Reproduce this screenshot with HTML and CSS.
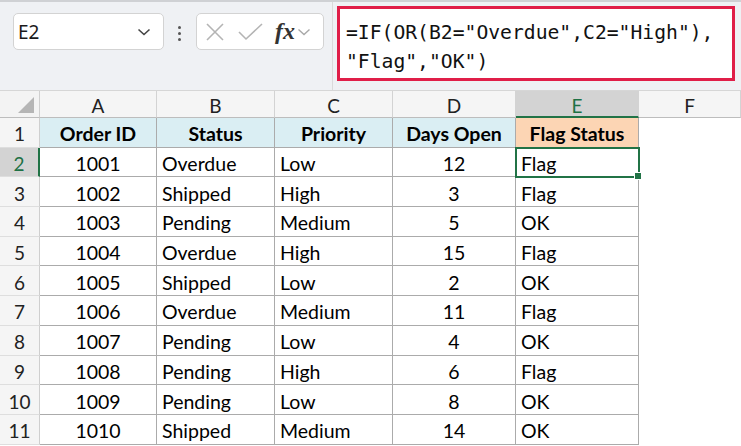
FILE: index.html
```html
<!DOCTYPE html>
<html>
<head>
<meta charset="utf-8">
<link rel="stylesheet" href="styles.css">
</head>
<body>
<div class="app">
  <div class="toolbar">
    <div class="namebox">
      <span class="name">E2</span>
      <svg class="chev" width="14" height="10" viewBox="0 0 14 10"><path d="M1.5 2.5 L7 7.5 L12.5 2.5" fill="none" stroke="#444" stroke-width="1.6"/></svg>
    </div>
    <div class="kebab"><i></i><i></i><i></i></div>
    <div class="fnbox">
      <svg width="18" height="18" viewBox="0 0 18 18"><path d="M1 1 L17 17 M17 1 L1 17" stroke="#b4b4b4" stroke-width="1.6" fill="none"/></svg>
      <svg width="25" height="20" viewBox="0 0 25 20"><path d="M1 10 L8 17 L24 2" stroke="#b4b4b4" stroke-width="1.6" fill="none"/></svg>
      <span class="fx">fx</span>
      <svg class="chev2" width="14" height="10" viewBox="0 0 14 10"><path d="M1.5 2.5 L7 7.5 L12.5 2.5" fill="none" stroke="#a8a8a8" stroke-width="1.4"/></svg>
    </div>
    <div class="formula-wrap">
      <div class="formula">=IF(OR(B2="Overdue",C2="High"),<br>"Flag","OK")</div>
    </div>
  </div>

  <div class="sheet">
    <div class="corner"><span class="tri"></span></div>
    <div class="ch">A</div>
    <div class="ch">B</div>
    <div class="ch">C</div>
    <div class="ch">D</div>
    <div class="ch sel">E</div>
    <div class="ch">F</div>

    <div class="rh">1</div>
    <div class="c hd blue">Order ID</div>
    <div class="c hd blue">Status</div>
    <div class="c hd blue">Priority</div>
    <div class="c hd blue">Days Open</div>
    <div class="c hd peach">Flag Status</div>
    <div class="c empty"></div>

    <div class="rh sel">2</div>
    <div class="c ctr">1001</div><div class="c">Overdue</div><div class="c">Low</div><div class="c ctr">12</div><div class="c active">Flag<span class="handle"></span></div><div class="c empty"></div>

    <div class="rh">3</div>
    <div class="c ctr">1002</div><div class="c">Shipped</div><div class="c">High</div><div class="c ctr">3</div><div class="c">Flag</div><div class="c empty"></div>

    <div class="rh">4</div>
    <div class="c ctr">1003</div><div class="c">Pending</div><div class="c">Medium</div><div class="c ctr">5</div><div class="c">OK</div><div class="c empty"></div>

    <div class="rh">5</div>
    <div class="c ctr">1004</div><div class="c">Overdue</div><div class="c">High</div><div class="c ctr">15</div><div class="c">Flag</div><div class="c empty"></div>

    <div class="rh">6</div>
    <div class="c ctr">1005</div><div class="c">Shipped</div><div class="c">Low</div><div class="c ctr">2</div><div class="c">OK</div><div class="c empty"></div>

    <div class="rh">7</div>
    <div class="c ctr">1006</div><div class="c">Overdue</div><div class="c">Medium</div><div class="c ctr">11</div><div class="c">Flag</div><div class="c empty"></div>

    <div class="rh">8</div>
    <div class="c ctr">1007</div><div class="c">Pending</div><div class="c">Low</div><div class="c ctr">4</div><div class="c">OK</div><div class="c empty"></div>

    <div class="rh">9</div>
    <div class="c ctr">1008</div><div class="c">Pending</div><div class="c">High</div><div class="c ctr">6</div><div class="c">Flag</div><div class="c empty"></div>

    <div class="rh">10</div>
    <div class="c ctr">1009</div><div class="c">Pending</div><div class="c">Low</div><div class="c ctr">8</div><div class="c">OK</div><div class="c empty"></div>

    <div class="rh">11</div>
    <div class="c ctr">1010</div><div class="c">Shipped</div><div class="c">Medium</div><div class="c ctr">14</div><div class="c">OK</div><div class="c empty"></div>
  </div>
</div>
</body>
</html>
```

FILE: styles.css
```css
* { box-sizing: border-box; }
html, body { margin: 0; padding: 0; background: #fff; }
body { width: 741px; height: 446px; overflow: hidden; }

.app { width: 741px; }

.toolbar {
  height: 91px;
  background: #eff1f4;
  border-top: 2px solid #cfd1d4;
  border-bottom: 1px solid #d6d6d6;
  display: flex;
  align-items: flex-start;
  position: relative;
}

.namebox {
  margin: 11px 0 0 13px;
  width: 151px;
  height: 37px;
  background: #fff;
  border: 1px solid #d3d3d3;
  border-radius: 5px;
  display: flex;
  align-items: center;
  justify-content: space-between;
  padding: 0 12px 0 4px;
}
.name {
  font-family: "Noto Sans", sans-serif;
  font-size: 19px;
  color: #1a1a1a;
}
.kebab {
  margin: 24px 0 0 14px;
  width: 4px;
  display: flex;
  flex-direction: column;
  gap: 3px;
}
.kebab i {
  display: block;
  width: 3px;
  height: 3px;
  background: #555;
  border-radius: 50%;
}
.fnbox {
  margin: 11px 0 0 14px;
  width: 128px;
  height: 37px;
  background: #fff;
  border: 1px solid #d3d3d3;
  border-radius: 5px;
  display: flex;
  align-items: center;
  padding: 0 0 0 9px;
  gap: 14px;
}
.fx {
  font-family: "Liberation Serif", serif;
  font-style: italic;
  font-weight: 700;
  font-size: 24px;
  color: #333;
  margin-left: -2px;
  letter-spacing: 0;
}
.chev2 { margin-left: -12px; }

.formula-wrap {
  margin-left: 8px;
  flex: 1;
  height: 88px;
  border-left: 1px solid #dadada;
  padding: 4px 0 0 4px;
}
.formula {
  width: 398px;
  height: 75px;
  border: 3px solid #e01e48;
  background: #fff;
  font-family: "DejaVu Sans Mono", monospace;
  font-size: 19.7px;
  line-height: 29px;
  color: #111;
  padding: 9px 0 0 6px;
  letter-spacing: 0;
}

.sheet {
  display: grid;
  grid-template-columns: 40px 117px 118px 118px 123px 123px 102px;
  grid-template-rows: 27px repeat(11, 29.7px);
  font-family: "Lato", "Liberation Sans", sans-serif;
  font-size: 19.5px;
  color: #000;
}
.corner {
  background: #f3f3f3;
  border-right: 1px solid #cfcfcf;
  border-bottom: 1px solid #bdbdbd;
  position: relative;
}
.tri {
  position: absolute;
  right: 5px;
  bottom: 4px;
  width: 0;
  height: 0;
  border-left: 16px solid transparent;
  border-bottom: 16px solid #b5b5b5;
}
.ch {
  background: #f5f5f5;
  border-right: 1px solid #d3d3d3;
  border-bottom: 1px solid #bdbdbd;
  display: flex;
  align-items: center;
  justify-content: center;
  font-size: 19px;
  color: #222;
  padding-top: 3px;
}
.ch.sel {
  background: #d3d3d3;
  color: #1e7145;
  border-bottom: 2px solid #217346;
}
.rh {
  background: #f5f5f5;
  border-right: 1px solid #cfcfcf;
  border-bottom: 1px solid #dedede;
  display: flex;
  align-items: center;
  justify-content: center;
  font-size: 19px;
  color: #222;
  padding-top: 3px;
}
.rh.sel {
  background: #d3d3d3;
  color: #1e7145;
  border-right: 2px solid #217346;
}
.c {
  border-right: 1px solid #ababab;
  border-bottom: 1px solid #ababab;
  display: flex;
  align-items: center;
  padding: 3px 5px 0;
  white-space: nowrap;
  position: relative;
}
.c.ctr { justify-content: center; }
.c.hd { justify-content: center; font-weight: 700; }
.c.blue { background: #daeef3; }
.c.peach { background: #fcd5b4; }
.c.empty { border: none; background: #fff; }
.c.active {
  outline: 2px solid #217346;
  outline-offset: -1px;
  z-index: 2;
}
.handle {
  position: absolute;
  right: -4px;
  bottom: -4px;
  width: 6px;
  height: 6px;
  background: #217346;
  border: 1px solid #fff;
  box-sizing: content-box;
}
```
